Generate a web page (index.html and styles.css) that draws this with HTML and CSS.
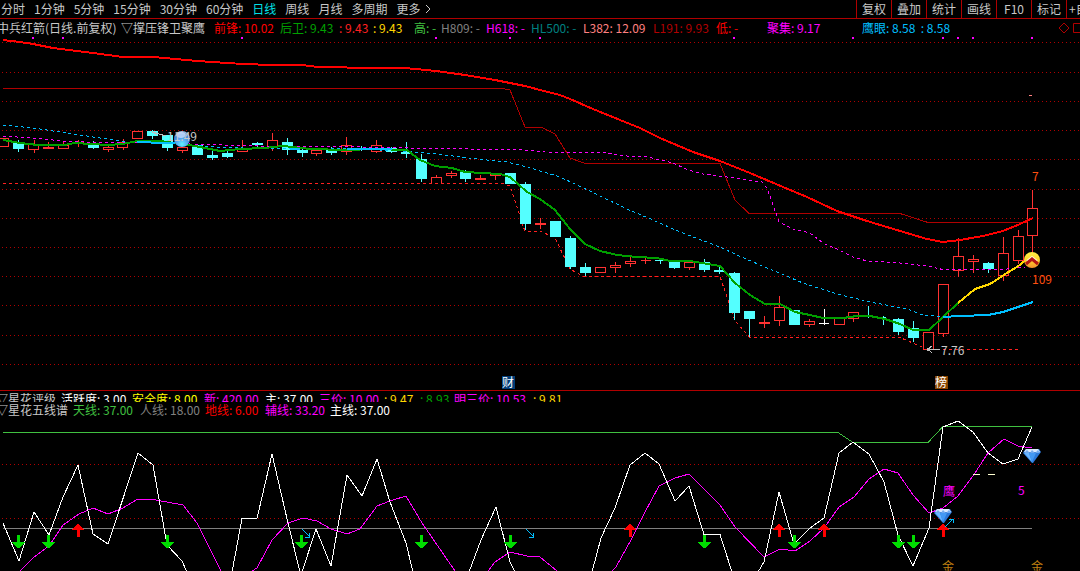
FILE: index.html
```html
<!DOCTYPE html>
<html lang="zh-CN">
<head>
<meta charset="utf-8">
<meta name="viewport" content="width=device-width, initial-scale=1">
<title>中兵红箭 日线</title>
<link rel="stylesheet" href="styles.css">
</head>
<body>
<header class="toolbar">
  <nav class="periods" aria-label="周期">
    <button type="button">分时</button>
    <button type="button">1分钟</button>
    <button type="button">5分钟</button>
    <button type="button">15分钟</button>
    <button type="button">30分钟</button>
    <button type="button">60分钟</button>
    <button type="button" class="active">日线</button>
    <button type="button">周线</button>
    <button type="button">月线</button>
    <button type="button">多周期</button>
    <button type="button" class="more">更多<svg class="chevron" viewBox="0 0 6 10" aria-hidden="true"><path d="M1 1l4 4-4 4"/></svg></button>
  </nav>
  <div class="tools">
    <button type="button">复权</button>
    <button type="button">叠加</button>
    <button type="button">统计</button>
    <button type="button">画线</button>
    <button type="button">F10</button>
    <button type="button">标记</button>
    <button type="button" class="add">+自选</button>
  </div>
</header>

<main>
<section class="panel">
  <div class="legend legend-price">
    <span class="stock">中兵红箭(日线.前复权)</span>
    <span>▽撑压锋卫聚鹰</span>
    <span class="red">前锋: 10.02</span>
    <span class="green">后卫: 9.43</span>
    <span class="scarlet">: 9.43</span>
    <span class="gold">: 9.43</span>
    <span class="lime">高: -</span>
    <span class="gray">H809: -</span>
    <span class="magenta">H618: -</span>
    <span class="teal">HL500: -</span>
    <span class="pink">L382: 12.09</span>
    <span class="maroon">L191: 9.93</span>
    <span class="red">低: -</span>
    <span class="magenta">聚集: 9.17</span>
    <span class="sky">鹰眼: 8.58 &nbsp;: 8.58</span>
    <svg class="markers" viewBox="0 0 22 12" aria-hidden="true"><path d="M6 1l5 5-5 5-5-5zM15.500 1.500h9v9h-9z"/></svg>
  </div>
  <svg class="chart" viewBox="0 37 1080 353" role="img" aria-label="日线走势">
    <path class="grid" d="M2 42.500H1080M2 72.500H1080M2 101.500H1080M2 130.500H1080M2 159.500H1080M2 189.500H1080M2 218.500H1080M2 247.500H1080M2 276.500H1080M2 305.500H1080M2 335.500H1080M2 364.500H1080"/>
    <path class="fill-magenta" d="M32 37h2v2h-2zM62 37h2v2h-2zM241 37h2v2h-2zM435 37h2v2h-2zM509 37h2v2h-2zM539 37h2v2h-2zM733 37h2v2h-2zM852 37h2v2h-2zM942 37h2v2h-2zM957 37h2v2h-2zM972 37h2v2h-2zM1031 37h2v2h-2z"/>
    <polyline class="line maroon" points="3,88.500 503,88.500 510,90 525,127 541,127 555,134 570,158 585,163.500 720,163.500 735,200 749,213.500 900,213.500 928,222.500 1032,222.500"/>
    <polyline class="line scarlet dash" points="3,183.500 503,183.500 510,186 525,231.500 541,231.500 555,238 570,269 583,276.500 720,276.500 735,321 750,337.500 900,337.500 928,349.500 1018,349.500"/>

    <g class="up">
      <path d="M34.500 140V144M34.500 150V153M48.500 142V147M63.500 142V145M78.500 140V147M108.500 144V147M108.500 150V152M123.500 139V142M123.500 148V150M182.500 151V153M242.500 140V148M272.500 133V140M272.500 147V151M316.500 154V156M346.500 137V145M346.500 151V155M376.500 140V145M376.500 151V153M436.500 175V177M451.500 171V173M451.500 176V178M480.500 175V180M495.500 176V180M540.500 218V229M615.500 262V265M615.500 268V273M630.500 257V261M630.500 264V267M645.500 258V264M689.500 268V270M764.500 316V328M779.500 296V307M779.500 321V326M809.500 319V321M809.500 325V327M853.500 318V322M943.500 334V337M958.500 238V256M958.500 271V277M973.500 255V259M973.500 262V273M1003.500 237V253M1003.500 276V281M1018.500 230V236M1018.500 261V264M1032.500 190V208M1032.500 236V255"/>
      <path d="M-1.500 138.500h10v8h-10zM28.500 144.500h10v5h-10zM43.500 147.500h10v1h-10zM58.500 145.500h10v3h-10zM73.500 142.500h10M103.500 147.500h10v2h-10zM117.500 142.500h10v5h-10zM132.500 131.500h10v7h-10zM177.500 147.500h10v3h-10zM237.500 148.500h10v3h-10zM267.500 140.500h10v6h-10zM311.500 150.500h10v3h-10zM341.500 145.500h10v6h-10zM371.500 145.500h10v6h-10zM431.500 183V177.500h10V183M446.500 173.500h10v2h-10zM475.500 178.500h10v1h-10zM490.500 174.500h10v1h-10zM535.500 223.500h10v1h-10zM595.500 267.500h10v5h-10zM610.500 265.500h10v2h-10zM625.500 261.500h10v2h-10zM640.500 260.500h10M684.500 262.500h10v5h-10zM759.500 322.500h10v1h-10zM774.500 307.500h10v13h-10zM804.500 321.500h10v3h-10zM834.500 318.500h10v6h-10zM848.500 312.500h10v6h-10zM923.500 332.500h10v17h-10zM938.500 284.500h10v49h-10zM953.500 256.500h10v14h-10zM968.500 259.500h10v2h-10zM998.500 253.500h10v22h-10zM1013.500 236.500h10v24h-10zM1027.500 208.500h10v27h-10z"/>
    </g>
    <g class="down">
      <path class="wick" d="M18.500 140V152M93.500 141V149M152.500 130V139M167.500 135V151M212.500 151V160M227.500 150V158M257.500 142V147M287.500 138V155M302.500 148V157M331.500 147V155M361.500 146V151M391.500 147V153M406.500 142V158M421.500 154V182M465.500 170V182M525.500 182V230M570.500 236V269M585.500 263V276M660.500 259V264M674.500 262V269M704.500 259V272M719.500 267V274M734.500 272V320M749.500 311V337M868.500 306V318M883.500 316V325M898.500 318V335M913.500 321V342M988.500 262V273"/>
      <path d="M13 142h11v7h-11zM88 143h11v5h-11zM147 131h11v5h-11zM162 135h11v13h-11zM192 145h11v10h-11zM207 155h11v3h-11zM222 153h11v4h-11zM252 143h11v2h-11zM282 142h11v8h-11zM297 150h11v3h-11zM326 150h11v3h-11zM356 148h11v2h-11zM386 148h11v4h-11zM401 152h11v2h-11zM416 159h11v20h-11zM460 171h11v8h-11zM505 173h11v11h-11zM520 184h11v40h-11zM550 221h11v16h-11zM565 238h11v29h-11zM580 267h11v6h-11zM655 260h11v1h-11zM669 262h11v6h-11zM699 262h11v8h-11zM714 270h11v2h-11zM729 273h11v40h-11zM744 311h11v8h-11zM789 310h11v15h-11zM880 317h6v1h-6zM893 319h11v13h-11zM908 328h11v10h-11zM983 263h11v6h-11z"/>
    </g>
    <path class="line white" d="M819 323.500h10M824.500 309V325"/>

    <polyline class="line sky dash" points="3,125 33,128 67,133 100,138 127,142 137,142"/>
    <polyline class="line sky dash" points="187,145 217,147 243,148 310,148 360,149 400,151 427,153 453,156 477,159 507,162 527,167 557,176 573,183 600,196 627,209 653,220 680,232 720,247 737,255 767,268 803,283 837,294 870,302 907,309 923,315 945,317"/>
    <polyline class="line magenta dash" points="3,136 45,139 60,141 85,142 150,143 190,144 260,146 360,147 410,148 525,150 545,152 607,153 627,156 648,157 673,163 688,170 703,174 727,177 762,182 767,188 779,222 793,229 810,233 823,243 837,249 853,257 867,261 900,263 927,266 945,270 960,269 1007,269 1025,267"/>
    <polyline class="line thick green" points="3,140 20,143 38,145 64,145 75,143 108,145 123,144 137,141 160,141 175,143 195,146 220,151 240,149 265,148 283,146 310,149 345,150 375,149 407,150 420,160 435,166 452,168 465,172 500,174 510,177 527,192 540,199 555,210 570,229 585,244 600,251 617,255 637,257 657,258 670,261 690,261 720,266 735,283 750,295 765,304 780,304 795,312 810,315 823,318 843,318 857,316 870,316 885,319 900,324 913,330 929,330 943,317 958,303"/>
    <path class="line thick sky" d="M137 142L165 143L175 143M290 149h10M347 149H392M943 317L960 316L988 315L1003 312L1018 307L1033 302"/>
    <polyline class="line thick red" points="3,40 20,42 33,44 53,48 93,53 123,57 153,57 197,61 243,64 273,65 302,65 318,67 375,68 405,68 436,71 465,75 495,80 510,83 525,86 540,90 560,95 570,99 593,109 620,120 640,128 660,138 693,152 720,161 750,173 783,187 807,197 837,211 867,221 900,231 927,239 943,242 960,240 983,236 1003,231 1020,224 1033,218"/>
    <polyline class="line thick gold" points="958,303 975,289 990,284 1007,273 1020,265 1029,257"/>

    <path class="line silver" d="M152 131L157 135M152 132L166 136"/>
    <defs>
      <radialGradient id="ball" cx="50%" cy="82%" r="78%">
        <stop offset="0" stop-color="#5ff4ff"/><stop offset=".38" stop-color="#58b2f6"/><stop offset=".75" stop-color="#3c7fe0"/><stop offset="1" stop-color="#a8bfe2"/>
      </radialGradient>
      <linearGradient id="coin" x2="0" y2="1">
        <stop offset="0" stop-color="#ffef48"/><stop offset=".5" stop-color="#ffd52c"/><stop offset="1" stop-color="#f5902c"/>
      </linearGradient>
    </defs>
    <g class="smooth">
      <circle cx="182" cy="139" r="8" fill="url(#ball)"/>
      <ellipse cx="181" cy="135" rx="5" ry="3" fill="#dceaff" opacity=".7"/>
      <circle cx="1032" cy="260" r="8" fill="url(#coin)"/>
      <path d="M1027 261l5-4 5 4" fill="none" stroke="#fff4d0" stroke-width="2"/>
      <path d="M1026 264l6-5 6 5" fill="none" stroke="#b41414" stroke-width="3"/>
    </g>
    <text class="note" x="167" y="141">11.49</text>

    <path class="line pink" d="M1029 95.500h3"/>
    <text class="price" x="1032" y="181">7</text>
    <text class="price" x="1032" y="284">109</text>
    <path class="line silver" d="M928 349.500H940M932 346L928 349L932 353"/>
    <path class="fill-silver" d="M927 348h3v3h-3z"/>
    <text class="note" x="941" y="355">7.76</text>
    <path fill="#003c78" d="M502 376h13v13h-13z"/>
    <text class="badge" x="502" y="387">财</text>
    <path fill="#884400" d="M935 376h13v13h-13z"/>
    <text class="badge" x="935" y="387">榜</text>
  </svg>
</section>

<section class="panel">
  <div class="legend legend-rating">
    <span class="stock">▽星花评级</span>
    <span class="white">活跃度: 3.00</span>
    <span class="yellow">安全度: 8.00</span>
    <span class="magenta">新: 420.00</span>
    <span class="white">主: 37.00</span>
    <span class="magenta">三价: 10.00</span>
    <span class="gold">: 9.47</span>
    <span class="green">: 8.93</span>
    <span class="magenta">明三价: 10.53</span>
    <span class="gold">: 9.81</span>
  </div>
  <div class="legend legend-lines">
    <span class="stock">▽星花五线谱</span>
    <span class="lime">天线: 37.00</span>
    <span class="gray">人线: 18.00</span>
    <span class="red">地线: 6.00</span>
    <span class="magenta">辅线: 33.20</span>
    <span class="white">主线: 37.00</span>
  </div>
  <svg class="chart" viewBox="0 417 1080 154" role="img" aria-label="星花五线谱">
    <defs>
      <path id="buy" d="M0 0L7 6H2V13H-1V6H-6V5z"/>
      <path id="sell" d="M-1 0H2V7H7L1 13H0L-6 8V7H-1z"/>
      <g id="gem">
        <path fill="#2b78d8" d="M-6-6H7L9-3L1 8H0L-9-2L-8-4z"/>
        <path fill="#d9e9ff" d="M-6-6H6L8-3H-8z"/>
        <path fill="#70a9ee" d="M-5-5L-2-2L0-5L3-2L6-5L8-2H-8z"/>
        <path fill="#68b5ff" d="M-8-2H-3L0 7z"/>
        <path fill="#4399f4" d="M-3-2H4L0 7z"/>
      </g>
    </defs>
    <path class="grid" d="M2 464.500H1080M2 518.500H1080"/>
    <path class="line gray" d="M3 528.500H1032"/>
    <polyline class="line lime" points="3,432.500 838,432.500 853,442.500 928,442.500 943,426.500 1032,426.500"/>
    <path class="line magenta" d="M20 571L33 558L49 546L63 525L79 514L93 508L108 514L123 508L137 499.500L153 499.500L183 505L197 523L221 571M252 571L257 568L272 540L288 523L303 518L317 521L331 529L347 534L360 529L377 506L390 501L406 496L422 523L455 571M488 571L495 562L510 552L527 556L540 557L557 571M612 571L616 567L631 540L645 512L659 486L675 478L689 474L704 489L720 505L735 527L764 557L780 549L795 551L810 541L824 528L839 507L854 497L869 479L884 469L898 473L913 495L929 513L943 508L958 496L973 476L988 453L1004 439L1018 446L1032 448"/>
    <path class="line white" d="M3 523L19 561L34 512L49 535L63 497L78 465L93 534L108 544L138 453L153 465L167 545L182 561L187 572M232 572L242 518.500L257 518.500L272 454L288 523L300 572M302 572L316 529L331 566L347 475L362 496L377 459L390 502L406 543L413 572M469 572L481 540L496 507L510 562L515 572M592 572L601 538L615 508L630 465L645 453L659 464L675 501L689 486L704 534.500L720 534.500L732 572M758 572L764 562L779 492L794 544L810 528L824 518L839 453L853 442L869 454L884 482L898 535L913 566L929 528L943 427L958 421L973 432L988 453L1003 464L1018 459L1032 427"/>
    <g fill="#00dc00">
      <use href="#sell" x="18" y="535"/><use href="#sell" x="48" y="535"/><use href="#sell" x="167" y="535"/><use href="#sell" x="301" y="535"/><use href="#sell" x="421" y="535"/><use href="#sell" x="510" y="535"/><use href="#sell" x="704" y="535"/><use href="#sell" x="794" y="535"/><use href="#sell" x="898" y="535"/><use href="#sell" x="913" y="535"/>
    </g>
    <g fill="#ff0000">
      <use href="#buy" x="78" y="524"/><use href="#buy" x="630" y="524"/><use href="#buy" x="779" y="524"/><use href="#buy" x="824" y="524"/><use href="#buy" x="943" y="524"/>
    </g>
    <g class="smooth"><use href="#gem" x="1032" y="455"/><use href="#gem" x="943" y="515"/></g>
    <path class="line sky" d="M302 529L310 537M309.500 533V537.500H305M526 529L534 537M533.500 533V537.500H529M945 527L953 519M949 519.500H953.500V523"/>
    <path class="line cream" d="M973 474.500h7M988 474.500h7"/>
    <text class="mark-magenta" x="943" y="496">鹰</text>
    <text class="mark-magenta" x="1018" y="495">5</text>
    <text class="mark-gold" x="942" y="571">金</text>
    <text class="mark-gold" x="1031" y="571">金</text>
  </svg>
</section>
</main>
</body>
</html>
```
FILE: styles.css
```css
* { box-sizing: border-box; }

body {
  margin: 0;
  background: #000;
  color: #c8c8c8;
  font: 400 12px/16px "Noto Sans CJK SC", "Noto Sans", sans-serif;
  overflow: hidden;
}

button {
  margin: 0;
  padding: 0;
  border: 0;
  background: none;
  color: inherit;
  font: inherit;
  white-space: nowrap;
  cursor: pointer;
}

.toolbar {
  display: flex;
  justify-content: space-between;
  height: 19px;
  border-bottom: 1px solid #b00000;
  overflow: hidden;
}

.periods {
  display: flex;
  gap: 9px;
  padding-left: 1px;
}

.periods .active { color: #00e0e8; }

.more {
  display: flex;
  align-items: center;
  gap: 5px;
}

.chevron {
  width: 6px;
  height: 10px;
  fill: none;
  stroke: currentColor;
}

.tools {
  display: grid;
  grid-template-columns: repeat(6, 35px) 14px;
}

.tools button { border-left: 1px solid #b00000; }

.tools .add {
  padding-left: 2px;
  text-align: left;
  overflow: hidden;
}

.panel { overflow: hidden; }
.panel + .panel { border-top: 1px solid #b00000; }

.legend {
  display: grid;
  overflow: hidden;
  white-space: nowrap;
}

.legend-price {
  grid-template-columns: 121px 93px 66px 59px 34px 41px 27px 45px 45px 52px 70px 63px 51px 95px 1fr 22px;
  height: 18px;
  line-height: 18px;
}

.legend-price .stock { margin-left: -3px; }

.legend-rating {
  grid-template-columns: 61px 71px 72px 61px 54px 65px 36px 34px 79px 1fr;
  height: 11px;
}

.legend-lines {
  grid-template-columns: 73px 67px 65px 60px 65px 1fr;
  height: 15px;
  line-height: 15px;
}

.legend-rating .stock,
.legend-lines .stock { margin-left: -4px; }

.markers {
  width: 22px;
  height: 12px;
  align-self: center;
  fill: none;
  stroke: #b00000;
}

.chart {
  display: block;
  width: 100%;
  height: auto;
  shape-rendering: crispEdges;
}

.smooth { shape-rendering: auto; }

.grid {
  fill: none;
  stroke: #b00000;
  stroke-dasharray: 1 3;
}

.line { fill: none; stroke: currentColor; }
.thick { stroke-width: 2; }
.dash { stroke-dasharray: 3 3; }

.up path { fill: #000; stroke: #ff3232; }
.down path { fill: #54ffff; }
.down .wick { fill: none; stroke: #54ffff; }

.fill-magenta { fill: #ff00ff; }
.fill-silver { fill: #c0c0c0; }

.note { fill: #c8c8c8; }
.price { fill: #ff5010; }
.badge { fill: #fff; }
.mark-magenta { fill: #ff00ff; }
.mark-gold { fill: #c08010; }

.red { color: #ff0000; }
.scarlet { color: #ff2020; }
.maroon { color: #b00000; }
.pink { color: #ff8080; }
.green { color: #00a000; }
.lime { color: #40c040; }
.gold { color: #ffd700; }
.yellow { color: #ffff00; }
.gray { color: #808080; }
.silver { color: #c0c0c0; }
.white { color: #fff; }
.cream { color: #ffffd0; }
.magenta { color: #ff00ff; }
.teal { color: #008080; }
.sky { color: #00bfff; }
```
